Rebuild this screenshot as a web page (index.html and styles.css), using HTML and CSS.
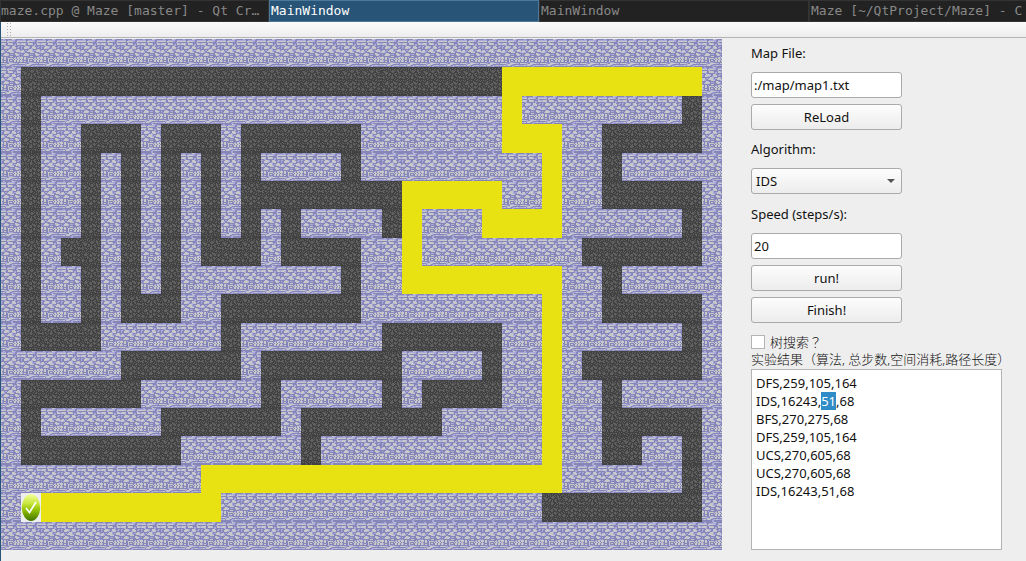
FILE: index.html
```html
<!DOCTYPE html>
<html lang="en">
<head>
<meta charset="utf-8">
<title>MainWindow</title>
<link rel="stylesheet" href="styles.css">
</head>
<body>
<nav class="tabs">
  <button class="tab" type="button">maze.cpp @ Maze [master] - Qt Cr…</button>
  <button class="tab tab-active" type="button">MainWindow</button>
  <button class="tab" type="button">MainWindow</button>
  <button class="tab tab-last" type="button">Maze [~/QtProject/Maze] - C</button>
</nav>
<div class="window">
  <div class="toolbar"><span class="grip"></span></div>
  <main class="content">
    <svg class="maze" id="maze" viewBox="0 0 721 511" preserveAspectRatio="none" shape-rendering="crispEdges" role="img" aria-label="Maze">
      <defs>
        <linearGradient id="ball" x1="0" y1="0" x2="0" y2="1">
          <stop offset="0" stop-color="#f4ff9a"/>
          <stop offset=".35" stop-color="#c8e63c"/>
          <stop offset=".6" stop-color="#90c000"/>
          <stop offset="1" stop-color="#437400"/>
        </linearGradient>
        <g id="goal">
          <rect width="20" height="29" fill="#eee"/>
          <ellipse cx="10" cy="14.5" rx="9.2" ry="13.5" fill="url(#ball)" shape-rendering="auto"/>
          <path d="M5 15 L8.5 19.5 L15 9" fill="none" stroke="#fff" stroke-width="1.7" shape-rendering="auto"/>
        </g>
      </defs>
    </svg>
    <form class="panel">
      <label class="caption" for="file">Map File:</label>
      <input class="control field" id="file" type="text" value=":/map/map1.txt">
      <button class="control button" type="button">ReLoad</button>
      <label class="caption" for="algorithm">Algorithm:</label>
      <div class="picker">
        <select class="control select" id="algorithm">
          <option>IDS</option>
          <option>DFS</option>
          <option>BFS</option>
          <option>UCS</option>
        </select>
      </div>
      <label class="caption" for="speed">Speed (steps/s):</label>
      <input class="control field" id="speed" type="text" value="20">
      <button class="control button" type="button">run!</button>
      <button class="control button" type="button">Finish!</button>
      <label class="check"><input class="box" type="checkbox">树搜索<span lang="zh-TW">？</span></label>
      <label class="results-label" for="results">实验结果（算法, 总步数,空间消耗,路径长度）</label>
      <textarea class="results" id="results" spellcheck="false">DFS,259,105,164
IDS,16243,51,68
BFS,270,275,68
DFS,259,105,164
UCS,270,605,68
UCS,270,605,68
IDS,16243,51,68</textarea>
    </form>
  </main>
</div>
<script src="maze.js"></script>
</body>
</html>
```
FILE: styles.css
```css
* { box-sizing: border-box; }

body {
  margin: 0;
  min-height: 100vh;
  display: flex;
  flex-direction: column;
  background: #eee;
  color: #111;
  font: 13px/18px "Noto Sans", "Noto Sans CJK SC", sans-serif;
}

.tabs {
  display: flex;
  height: 22px;
  overflow: hidden;
  background: #222;
}

.tab {
  flex: 0 0 270px;
  padding: 0 1px;
  border: 1px solid #333;
  background: #222;
  color: #888;
  font: 13px/18px "DejaVu Sans Mono", monospace;
  text-align: left;
  white-space: nowrap;
  overflow: hidden;
  text-overflow: ellipsis;
}

.tab:first-child {
  flex-basis: 269px;
  padding-left: 0;
}

.tab-last {
  flex: 1 1 0;
  min-width: 0;
  padding-right: 0;
  border-right: 0;
  text-overflow: clip;
}

.tab-active {
  border-color: #4c7899;
  background: #285577;
  color: #fff;
}

.window {
  flex: 1;
  border-left: 1px solid #285577;
}

.toolbar {
  height: 16px;
  padding-left: 5px;
  border-bottom: 1px solid #b4b4b4;
  background: linear-gradient(#fbfbfb, #ededed);
}

.grip {
  display: block;
  width: 6px;
  height: 15px;
  background: radial-gradient(circle, #b0b0b0 1px, transparent 1px) 0 0 / 3px 3px;
}

.content {
  display: flex;
  align-items: flex-start;
  padding-top: 1px;
}

.maze {
  display: block;
  flex: 1 1 0;
  min-width: 0;
  height: 511px;
}

.panel {
  flex: 0 0 304px;
  display: flex;
  flex-direction: column;
  align-items: flex-start;
  padding: 5px 0 0 29px;
}

.caption { margin-bottom: 10px; }

.control {
  width: 151px;
  height: 26px;
  margin-bottom: 6px;
  border: 1px solid #aaa;
  border-radius: 3px;
  color: #111;
  font: inherit;
}

.field {
  padding: 0 2px;
  background: #fff;
  outline: none;
}

.button {
  padding: 0;
  background: linear-gradient(#fdfdfd, #ececec);
  text-align: center;
}

.control + .caption { margin-top: 4px; }

.picker + .caption { margin-top: 5px; }

.picker { position: relative; }

.picker::after {
  content: "";
  position: absolute;
  right: 7px;
  top: 11px;
  border: 4px solid transparent;
  border-top-color: #555;
  border-bottom: 0;
  pointer-events: none;
}

.select {
  display: block;
  appearance: none;
  padding: 0 4px;
  background: linear-gradient(#fdfdfd, #ececec);
}

.check,
.results-label {
  color: #111;
  font-weight: 300;
}

.check {
  display: flex;
  align-items: center;
  gap: 5px;
  margin-top: 4px;
  height: 18px;
}

.check span {
  margin-left: -5px;
  font-family: "Noto Sans CJK TC", sans-serif;
}

.box {
  appearance: none;
  width: 14px;
  height: 14px;
  margin: 0;
  border: 1px solid #b4b4b4;
  background: #fff;
}

.results-label {
  height: 18px;
  line-height: 16px;
  white-space: nowrap;
}

.results {
  width: 251px;
  height: 181px;
  padding: 4px;
  border: 1px solid #b4b4b4;
  background: #fff;
  color: #111;
  font: inherit;
  outline: none;
  resize: none;
}

.results::selection {
  background: #308cc6;
  color: #fff;
}
```
FILE: maze.js
```js
// Legend: # wall, . floor, * path, G goal
const map = [
  "####################################",
  "#........................**********#",
  "#.#######################*########.#",
  "#.##...#...#......#######***##.....#",
  "#.##.#.#.#.#.####.#########*##.#####",
  "#.##.#.#.#.#........*****##*##.....#",
  "#.##.#.#.#.#.#.####.*###****######.#",
  "#.#..#.#.#...#....##*########......#",
  "#.##.#.#.########.##********##.#####",
  "#.##.#...##.......#########*##.....#",
  "#....######.#######......##*######.#",
  "######......#.......####.##*#......#",
  "#......######.#####.#....##*##.#####",
  "#.######......#.......#####*##.....#",
  "#........######.###########*##..##.#",
  "##########******************######.#",
  "#G*********################........#",
  "####################################"
];

// Tile bitmaps: one character per pixel
const colors = { l: "#c8c8ca", a: "#aaaadb", b: "#8686b8", d: "#424242", g: "#606060" };
const tiles = {
  "#": [
    "bbaabbbbbbbllaabbbbb",
    "aaaaabbaaaaaaabbaaaa",
    "lllllbllllllaabbllll",
    "bbbbbbaabbbbbbbaabbb",
    "allllbbllllabbbbllaa",
    "llllabblllllbaabllla",
    "bbbaabbbbbbbbaabbbbb",
    "aabblllaabblllbbbaab",
    "abblllllabbllllbaabb",
    "abblllaabbaalllbbbbb",
    "bbbbbbbblllabbbbllab",
    "allbaabllllabaallllb",
    "lllabblllllaabblllla",
    "llaabbbbbllllbbbbbaa",
    "bbbbllabbbbbbbllabbb",
    "abblllllbaaabbllllab",
    "bballllabbbbbbbllabb",
    "abbbbbbbblllbbbbbbab",
    "llbllbabbbbbbbabllal",
    "llbllbblllllbllbllbl",
    "lbbllbblbbbblbllbllb",
    "labbbbblbllbbllbllbl",
    "labllbblbbbbbllbllbl",
    "bbbbbbbaaaaabbbbbbbb",
    "llllaabbllllllaaabll",
    "bbbbaallllabbbbbbbbb",
    "aallblllabbaaallaaaa",
    "bbbbbbbbbbaabbbbbbbb"
  ],
  ".": [
    "dddddddgddddddddgddd",
    "dgddgdgdddgddgdddgdd",
    "gdgdddgdgdddgddgdddg",
    "ddddgdddgdggdgdggdgd",
    "dgggddgddggggddggddd",
    "ddggggddddggddddgggd",
    "gddgggdggddddggdgddd",
    "dgdggddggdgdggdddgdg",
    "ddddddggddgddggddddd",
    "dggdgddddggdddgdgggd",
    "ggddggdgdgggdddgdggg",
    "dggdddgddggddgdddgdd",
    "dddddgddddddgddgdddd",
    "dgdgdddgdgddddggdgdg",
    "ddgddgdddddgddddddgd",
    "gdddggdgdddgggdgdddd",
    "dgdggggddggdgggddggd",
    "dddgggddgggddggdgggd",
    "dgddddgddggddddddgdd",
    "ddgdgdggddddggdgdddg",
    "gdddddgdgdgdgggddgdd",
    "dggddddddggddgddgggd",
    "ggggdgddggggdddddggd",
    "dggddgddgggddgdgdddd",
    "ddddgddddddddddddgdg",
    "dgddddgddgdgdggddddd",
    "ddgdgdddgdddddgdgdgd",
    "dddddgddddgddddddddd"
  ]
};

const NS = "http://www.w3.org/2000/svg";
const svg = document.getElementById("maze");
const defs = svg.querySelector("defs");

function add(parent, name, attrs) {
  const node = document.createElementNS(NS, name);
  for (const key in attrs) node.setAttribute(key, attrs[key]);
  parent.appendChild(node);
  return node;
}

// Turns each colour of a bitmap into one path of horizontal runs
function defineTile(id, rows) {
  const group = add(defs, "g", { id });
  const runs = {};
  rows.forEach((row, y) => {
    const height = y === rows.length - 1 ? 2 : 1;
    for (const run of row.matchAll(/(.)\1*/g)) {
      runs[run[1]] = (runs[run[1]] || "") + `M${run.index} ${y}h${run[0].length}v${height}h-${run[0].length}z`;
    }
  });
  for (const key in runs) add(group, "path", { d: runs[key], fill: colors[key] });
}

defineTile("wall", tiles["#"]);
defineTile("floor", tiles["."]);

const left = c => Math.round(c * 721 / 36 - 0.01);
const topOf = r => Math.round(r * 511 / 18 - 0.01);
const ids = { "#": "wall", ".": "floor", "G": "goal" };

map.forEach((row, r) => {
  [...row].forEach((cell, c) => {
    const x = left(c), y = topOf(r);
    if (cell === "*") {
      add(svg, "rect", { x, y, width: left(c + 1) - x, height: topOf(r + 1) - y, fill: "#e8e212" });
    } else {
      if (left(c + 1) - x > 20) add(svg, "use", { href: "#" + ids[cell], x: x + 1, y });
      add(svg, "use", { href: "#" + ids[cell], x, y });
    }
  });
});

const results = document.getElementById("results");
const start = results.value.indexOf("51,68");
results.focus();
results.setSelectionRange(start, start + 2);
```
